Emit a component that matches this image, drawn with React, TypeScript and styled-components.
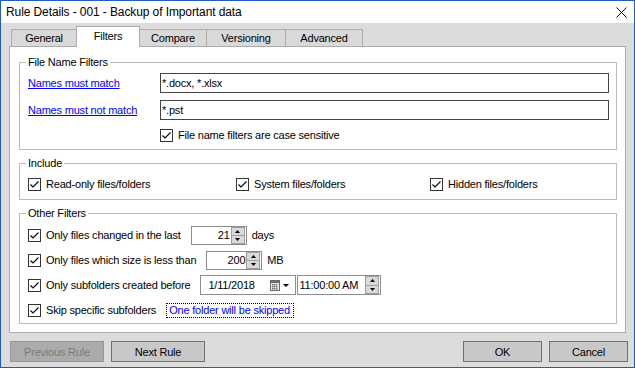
import React from 'react';
import styled, { createGlobalStyle } from 'styled-components';

const GlobalStyle = createGlobalStyle`
  html, body {
    margin: 0;
    padding: 0;
    background: #ffffff;
  }
  body {
    font-family: 'Liberation Sans', Arial, sans-serif;
    font-size: 11px;
    letter-spacing: -0.2px;
    color: #000000;
  }
`;

const Window = styled.div`
  width: 635px;
  height: 368px;
  box-sizing: border-box;
  border: 1px solid #1f5cc4;
  background: #dcdcdc;
  display: flex;
  flex-direction: column;
  overflow: hidden;
`;

const TitleBar = styled.div`
  height: 22px;
  flex-shrink: 0;
  background: #ffffff;
  display: flex;
  align-items: center;
  justify-content: space-between;
  padding: 0 7px 0 5px;
`;

const TitleText = styled.span`
  font-size: 12px;
  letter-spacing: -0.1px;
`;

const Body = styled.div`
  flex: 1;
  display: flex;
  flex-direction: column;
  padding: 3px 8px 0 8px;
`;

const TabStrip = styled.div`
  height: 21px;
  margin-bottom: -1px;
  padding-left: 2px;
  display: flex;
  align-items: flex-end;
  position: relative;
  z-index: 1;
`;

const Tab = styled.div<{ $width: number; $active?: boolean }>`
  width: ${p => p.$width}px;
  height: ${p => (p.$active ? 21 : 18)}px;
  box-sizing: border-box;
  margin-left: -1px;
  border: 1px solid #adadad;
  border-bottom: ${p => (p.$active ? 'none' : '1px solid #adadad')};
  background: ${p => (p.$active ? '#ffffff' : '#d9d9d9')};
  display: flex;
  align-items: center;
  justify-content: center;
  padding-bottom: ${p => (p.$active ? 3 : 0)}px;
  position: relative;
  z-index: ${p => (p.$active ? 2 : 1)};

  &:first-child {
    margin-left: 0;
  }
`;

const Panel = styled.div`
  height: 287px;
  box-sizing: border-box;
  border: 1px solid #adadad;
  background: #ffffff;
  padding: 8px 8px 0 9px;
  display: flex;
  flex-direction: column;
  gap: 6px;
`;

const Group = styled.fieldset<{ $pt: number; $pb: number }>`
  margin: 0;
  min-width: 0;
  border: 1px solid #bcbcbc;
  padding: ${p => p.$pt}px 7px ${p => p.$pb}px 8px;
`;

const Legend = styled.legend`
  padding: 0 2px;
  margin-left: -2px;
  line-height: 14px;
  height: 14px;
`;

const NameGrid = styled.div`
  display: grid;
  grid-template-columns: 132px 1fr;
  row-gap: 7px;
  align-items: center;
`;

const LinkLabel = styled.a`
  color: #0000ff;
  text-decoration: underline;
  cursor: pointer;
`;

const TextInput = styled.div`
  height: 20px;
  box-sizing: border-box;
  border: 1px solid #444444;
  background: #ffffff;
  padding-left: 1px;
  line-height: 18px;
`;

const CheckRow = styled.label<{ $col?: number }>`
  height: 16px;
  display: flex;
  align-items: center;
  gap: 5px;
  grid-column: ${p => p.$col ?? 'auto'};
  white-space: nowrap;
`;

const CheckBoxFrame = styled.span`
  width: 13px;
  height: 13px;
  box-sizing: border-box;
  border: 1px solid #333333;
  background: #ffffff;
  display: inline-flex;
  flex-shrink: 0;
`;

const IncludeGrid = styled.div`
  display: grid;
  grid-template-columns: 208px 194px 1fr;
`;

const FilterList = styled.div`
  display: flex;
  flex-direction: column;
  gap: 5px;
`;

const FilterRow = styled.div`
  height: 20px;
  display: flex;
  align-items: center;
  white-space: nowrap;
`;

const RowLabel = styled.label`
  display: flex;
  align-items: center;
  gap: 5px;
  margin-right: 10px;
`;

const Unit = styled.span`
  margin-left: 5px;
`;

const SpinBox = styled.div<{ $width: number; $height?: number }>`
  width: ${p => p.$width}px;
  height: ${p => p.$height ?? 19}px;
  box-sizing: border-box;
  border: 1px solid #8c8c8c;
  background: #ffffff;
  display: flex;
  align-items: stretch;
`;

const SpinValue = styled.span<{ $align?: string }>`
  flex: 1;
  padding: 0 1px;
  display: flex;
  align-items: center;
  justify-content: ${p => (p.$align === 'left' ? 'flex-start' : 'flex-end')};
`;

const SpinButtons = styled.div`
  width: 14px;
  margin-right: 1px;
  display: flex;
  flex-direction: column;
`;

const SpinHalf = styled.div`
  flex: 1;
  background: #d9d9d9;
  border: 1px solid #9e9e9e;
  display: flex;
  align-items: center;
  justify-content: center;

  & + & {
    border-top: none;
  }
`;

const DateBox = styled.div`
  width: 96px;
  height: 20px;
  box-sizing: border-box;
  border: 1px solid #8c8c8c;
  background: #ffffff;
  display: flex;
  align-items: center;
  padding: 0 5px 0 7px;
  margin-right: 1px;
`;

const DateText = styled.span`
  flex: 1;
`;

const SkipLink = styled.span`
  color: #0000ff;
  border: 1px dotted #000000;
  padding: 0 3px 0 2px;
  line-height: 13px;
`;

const Footer = styled.div`
  margin-top: 8px;
  height: 21px;
  display: flex;
  justify-content: space-between;
  margin-left: 1px;
  margin-right: -2px;
`;

const ButtonGroup = styled.div`
  display: flex;
  gap: 7px;
`;

const Button = styled.button<{ $width: number }>`
  width: ${p => p.$width}px;
  height: 21px;
  box-sizing: border-box;
  margin: 0;
  padding: 0;
  font: inherit;
  letter-spacing: inherit;
  border: 1px solid #707070;
  background: #c8c8c8;
  color: #000000;

  &:disabled {
    border-color: #979797;
    background: #ababab;
    color: #7b7b7b;
  }
`;

const Check = () => (
  <CheckBoxFrame>
    <svg width="11" height="11" viewBox="0 0 11 11">
      <path d="M1.5 5.5 L4 8 L9.5 2.5" fill="none" stroke="#000" strokeWidth="1.1" />
    </svg>
  </CheckBoxFrame>
);

const Spinner: React.FC = () => (
  <SpinButtons>
    <SpinHalf>
      <svg width="5" height="3" viewBox="0 0 5 3">
        <path d="M0 3 L2.5 0 L5 3 Z" fill="#000" />
      </svg>
    </SpinHalf>
    <SpinHalf>
      <svg width="5" height="3" viewBox="0 0 5 3">
        <path d="M0 0 L5 0 L2.5 3 Z" fill="#000" />
      </svg>
    </SpinHalf>
  </SpinButtons>
);

const CalendarIcon = () => (
  <svg width="20" height="11" viewBox="0 0 20 11">
    <rect x="0.5" y="0.5" width="9" height="10" fill="#e8e8e8" stroke="#6a6a6a" />
    <rect x="1" y="1" width="8" height="2" fill="#6a6a6a" />
    {[4, 6, 8].map(y =>
      [2, 4, 6].map(x => <rect key={`${x}-${y}`} x={x} y={y} width="1.4" height="1.4" fill="#6a6a6a" />)
    )}
    <path d="M13 4 L19 4 L16 7 Z" fill="#000" />
  </svg>
);

const tabs = [
  { label: 'General', width: 66 },
  { label: 'Filters', width: 64, active: true },
  { label: 'Compare', width: 68 },
  { label: 'Versioning', width: 80 },
  { label: 'Advanced', width: 78 },
];

const App: React.FC = () => (
  <>
    <GlobalStyle />
    <Window>
      <TitleBar>
        <TitleText>Rule Details - 001 - Backup of Important data</TitleText>
        <svg width="11" height="11" viewBox="0 0 11 11">
          <path d="M0.5 0.5 L10.5 10.5 M10.5 0.5 L0.5 10.5" stroke="#000" strokeWidth="1" />
        </svg>
      </TitleBar>

      <Body>
        <TabStrip>
          {tabs.map(t => (
            <Tab key={t.label} $width={t.width} $active={t.active}>
              {t.label}
            </Tab>
          ))}
        </TabStrip>

        <Panel>
          <Group $pt={4} $pb={6}>
            <Legend>File Name Filters</Legend>
            <NameGrid>
              <LinkLabel>Names must match</LinkLabel>
              <TextInput>*.docx, *.xlsx</TextInput>
              <LinkLabel>Names must not match</LinkLabel>
              <TextInput>*.pst</TextInput>
              <CheckRow $col={2}>
                <Check />
                File name filters are case sensitive
              </CheckRow>
            </NameGrid>
          </Group>

          <Group $pt={6} $pb={7}>
            <Legend>Include</Legend>
            <IncludeGrid>
              <CheckRow>
                <Check />
                Read-only files/folders
              </CheckRow>
              <CheckRow>
                <Check />
                System files/folders
              </CheckRow>
              <CheckRow>
                <Check />
                Hidden files/folders
              </CheckRow>
            </IncludeGrid>
          </Group>

          <Group $pt={5} $pb={3}>
            <Legend>Other Filters</Legend>
            <FilterList>
              <FilterRow>
                <RowLabel>
                  <Check />
                  Only files changed in the last
                </RowLabel>
                <SpinBox $width={56}>
                  <SpinValue>21</SpinValue>
                  <Spinner />
                </SpinBox>
                <Unit>days</Unit>
              </FilterRow>
              <FilterRow>
                <RowLabel>
                  <Check />
                  Only files which size is less than
                </RowLabel>
                <SpinBox $width={56}>
                  <SpinValue>200</SpinValue>
                  <Spinner />
                </SpinBox>
                <Unit>MB</Unit>
              </FilterRow>
              <FilterRow>
                <RowLabel>
                  <Check />
                  Only subfolders created before
                </RowLabel>
                <DateBox>
                  <DateText>1/11/2018</DateText>
                  <CalendarIcon />
                </DateBox>
                <SpinBox $width={84} $height={20}>
                  <SpinValue $align="left">11:00:00 AM</SpinValue>
                  <Spinner />
                </SpinBox>
              </FilterRow>
              <FilterRow>
                <RowLabel>
                  <Check />
                  Skip specific subfolders
                </RowLabel>
                <SkipLink>One folder will be skipped</SkipLink>
              </FilterRow>
            </FilterList>
          </Group>
        </Panel>

        <Footer>
          <ButtonGroup>
            <Button $width={94} disabled>
              Previous Rule
            </Button>
            <Button $width={94}>Next Rule</Button>
          </ButtonGroup>
          <ButtonGroup>
            <Button $width={79}>OK</Button>
            <Button $width={79}>Cancel</Button>
          </ButtonGroup>
        </Footer>
      </Body>
    </Window>
  </>
);

export default App;
